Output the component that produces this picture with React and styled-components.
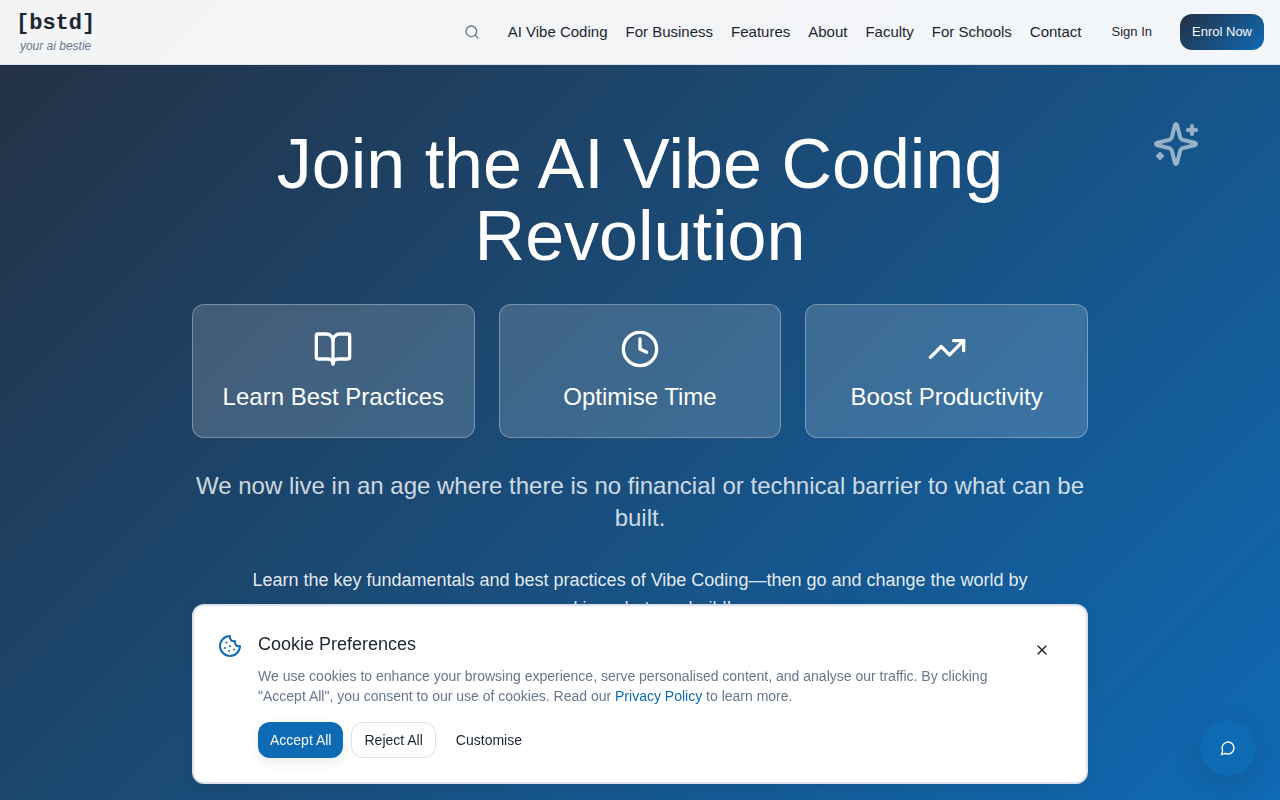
import styled, { createGlobalStyle } from 'styled-components';
import { BookOpen, Clock, Cookie, Search, TrendingUp, X } from 'lucide-react';

const GlobalStyle = createGlobalStyle`
  *, *::before, *::after {
    box-sizing: border-box;
  }

  body {
    margin: 0;
    color: #1d2530;
    font-family: 'Liberation Sans', Arial, sans-serif;
    font-size: 15px;
    line-height: 24px;
    background: #fff;
  }

  h1, h2, h3, p {
    margin: 0;
    font-weight: 400;
  }

  a {
    color: inherit;
    text-decoration: none;
  }

  button {
    font-family: inherit;
    color: inherit;
    cursor: pointer;
  }
`;

const Page = styled.div`
  height: 100vh;
  display: flex;
  flex-direction: column;
  overflow: hidden;
  background: linear-gradient(135deg, #243042, #0f6ab4);
`;

const Header = styled.header`
  flex: none;
  height: 65px;
  padding: 0 16px;
  display: flex;
  align-items: center;
  justify-content: space-between;
  background: rgba(255, 255, 255, 0.95);
  border-bottom: 1px solid #dbe2ec;
`;

const Logo = styled.a`
  display: flex;
  flex-direction: column;
  align-items: center;
`;

const LogoMark = styled.span`
  font-family: 'Liberation Mono', 'Courier New', monospace;
  font-size: 22px;
  font-weight: 700;
  line-height: 28px;
`;

const Tagline = styled.span`
  color: #68778d;
  font-size: 12px;
  font-style: italic;
  line-height: 16px;
`;

const Nav = styled.nav`
  display: flex;
  align-items: center;
  gap: 18px;
`;

const IconButton = styled.button`
  width: 40px;
  height: 40px;
  padding: 0;
  display: grid;
  place-items: center;
  flex: none;
  border: 0;
  border-radius: 12px;
  background: transparent;
`;

const SearchButton = styled(IconButton)`
  width: 36px;
  color: #68778d;
`;

const NavLink = styled.a`
  white-space: nowrap;
`;

const Button = styled.button`
  height: 36px;
  padding: 0 12px;
  border: ${({ $variant }) => ($variant === 'outline' ? '1px solid #dbe2ec' : '0')};
  border-radius: 12px;
  color: ${({ $variant }) => ($variant === 'primary' || $variant === 'gradient' ? '#f8fafc' : '#1d2530')};
  background: ${({ $variant }) => ({
    primary: '#0f6ab4',
    gradient: 'linear-gradient(135deg, #243042, #0f6ab4)',
    outline: '#fff',
  }[$variant] || 'transparent')};
  box-shadow: ${({ $variant }) => ($variant === 'primary' ? '0 4px 12px rgba(29, 37, 48, 0.1)' : 'none')};
  font-size: 14px;
  line-height: 20px;
  white-space: nowrap;
`;

const Account = styled.div`
  display: flex;
  align-items: center;
  gap: 16px;

  button {
    font-size: 13px;
  }
`;

const Hero = styled.main`
  position: relative;
  flex: 1;
  padding: 63px 16px;
`;

const HeroContent = styled.div`
  max-width: 896px;
  margin: 0 auto;
  text-align: center;
  color: #fff;
`;

const Title = styled.h1`
  font-size: 70px;
  line-height: 72px;
`;

const FloatingSparkles = styled.svg`
  position: absolute;
  top: 55px;
  right: 80px;
  color: #fff;
  opacity: 0.55;
`;

const Features = styled.div`
  margin-top: 32px;
  display: grid;
  grid-template-columns: repeat(3, 1fr);
  gap: 24px;
`;

const FeatureCard = styled.div`
  padding: 24px;
  display: flex;
  flex-direction: column;
  align-items: center;
  gap: 12px;
  border: 1px solid rgba(255, 255, 255, 0.3);
  border-radius: 12px;
  background: rgba(255, 255, 255, 0.16);

  h3 {
    font-size: 24px;
    line-height: 32px;
    white-space: nowrap;
  }
`;

const Lead = styled.p`
  margin-top: 32px;
  font-size: 24px;
  line-height: 32px;
  color: rgba(255, 255, 255, 0.8);
`;

const Detail = styled.p`
  max-width: 784px;
  margin: 32px auto 0;
  font-size: 18px;
  line-height: 28px;
  color: rgba(255, 255, 255, 0.9);
`;

const CookieBanner = styled.section`
  position: fixed;
  left: 16px;
  right: 16px;
  bottom: 16px;
  max-width: 896px;
  margin: 0 auto;
  padding: 24px;
  display: flex;
  align-items: flex-start;
  gap: 16px;
  border: 2px solid #dbe2ec;
  border-radius: 12px;
  background: #fff;
  box-shadow: 0 4px 12px rgba(29, 37, 48, 0.1);
`;

const CookieIcon = styled(Cookie)`
  flex: none;
  margin-top: 4px;
  color: #0f6ab4;
`;

const CookieBody = styled.div`
  flex: 1;

  h2 {
    font-size: 18px;
    line-height: 28px;
  }

  p {
    margin-top: 8px;
    color: #68778d;
    font-size: 14px;
    line-height: 20px;
  }

  p a {
    color: #0f6ab4;
  }
`;

const Actions = styled.div`
  margin-top: 16px;
  display: flex;
  gap: 8px;
`;

const ChatButton = styled.button`
  position: fixed;
  right: 24px;
  bottom: 24px;
  width: 56px;
  height: 56px;
  padding: 0;
  display: grid;
  place-items: center;
  border: 0;
  border-radius: 50%;
  background: #0f6ab4;
  box-shadow: 0 8px 24px rgba(29, 37, 48, 0.16);

  svg {
    color: #fff;
  }
`;

const strokeProps = {
  viewBox: '0 0 24 24',
  fill: 'none',
  stroke: 'currentColor',
  strokeWidth: 2,
  strokeLinecap: 'round',
  strokeLinejoin: 'round',
};

const navLinks = ['AI Vibe Coding', 'For Business', 'Features', 'About', 'Faculty', 'For Schools', 'Contact'];

const features = [
  { title: 'Learn Best Practices', icon: BookOpen },
  { title: 'Optimise Time', icon: Clock },
  { title: 'Boost Productivity', icon: TrendingUp },
];

const App = () => (
  <Page>
    <GlobalStyle />
    <Header>
      <Logo href="#">
        <LogoMark>[bstd]</LogoMark>
        <Tagline>your ai bestie</Tagline>
      </Logo>
      <Nav>
        <SearchButton aria-label="Search"><Search size={16} /></SearchButton>
        {navLinks.map((label) => (
          <NavLink key={label} href="#">{label}</NavLink>
        ))}
        <Account>
          <Button>Sign In</Button>
          <Button $variant="gradient">Enrol Now</Button>
        </Account>
      </Nav>
    </Header>

    <Hero>
      <FloatingSparkles width="48" height="48" aria-hidden="true" {...strokeProps}>
        <path d="M9.937 15.5A2 2 0 0 0 8.5 14.063l-6.135-1.582a.5.5 0 0 1 0-.962L8.5 9.936A2 2 0 0 0 9.937 8.5l1.582-6.135a.5.5 0 0 1 .963 0L14.063 8.5A2 2 0 0 0 15.5 9.937l6.135 1.581a.5.5 0 0 1 0 .964L15.5 14.063a2 2 0 0 0-1.437 1.437l-1.582 6.135a.5.5 0 0 1-.963 0z" />
        <path d="M20 3v4" />
        <path d="M22 5h-4" />
        <path d="M4 17v2" />
        <path d="M5 18H3" />
      </FloatingSparkles>
      <HeroContent>
        <Title>Join the AI Vibe Coding Revolution</Title>
        <Features>
          {features.map(({ title, icon: Icon }) => (
            <FeatureCard key={title}>
              <Icon size={40} />
              <h3>{title}</h3>
            </FeatureCard>
          ))}
        </Features>
        <Lead>We now live in an age where there is no financial or technical barrier to what can be built.</Lead>
        <Detail>
          Learn the key fundamentals and best practices of Vibe Coding—then go and change the world by
          making what you build!
        </Detail>
      </HeroContent>
    </Hero>

    <CookieBanner aria-labelledby="cookie-title">
      <CookieIcon size={24} />
      <CookieBody>
        <h2 id="cookie-title">Cookie Preferences</h2>
        <p>
          We use cookies to enhance your browsing experience, serve personalised content, and analyse our traffic.
          By clicking "Accept All", you consent to our use of cookies. Read our <a href="#">Privacy Policy</a> to
          learn more.
        </p>
        <Actions>
          <Button $variant="primary">Accept All</Button>
          <Button $variant="outline">Reject All</Button>
          <Button>Customise</Button>
        </Actions>
      </CookieBody>
      <IconButton aria-label="Close"><X size={16} /></IconButton>
    </CookieBanner>

    <ChatButton aria-label="Open chat">
      <svg width="16" height="16" {...strokeProps}>
        <path d="M7.9 20A9 9 0 1 0 4 16.1L2 22Z" />
      </svg>
    </ChatButton>
  </Page>
);

export default App;
